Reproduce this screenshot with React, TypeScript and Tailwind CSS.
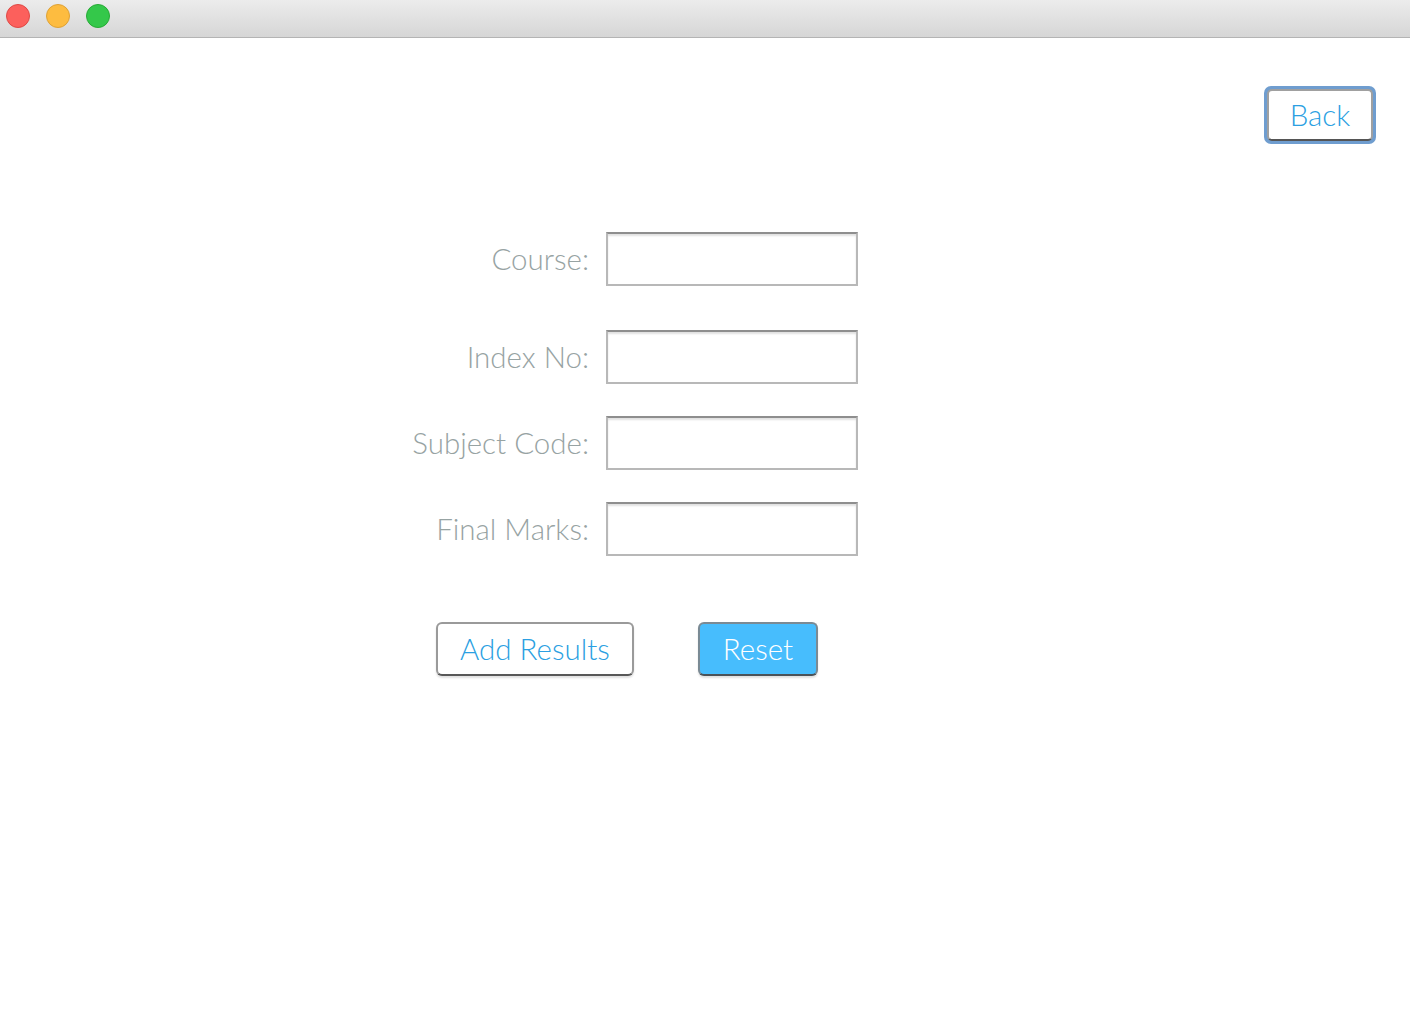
import React from "react";

const font = { fontFamily: "Lato, 'Open Sans', sans-serif" };

function Row({ label, className }: { label: string; className?: string }) {
  return (
    <div className={"flex items-center " + (className ?? "")}>
      <div className="w-[606px] pr-[17px] text-right text-[29.5px] font-light text-[#97a3a3] leading-none">
        {label}
      </div>
      <div className="w-[252px] h-[54px] border-2 border-[#b8b8b8] border-t-[#8e8e8e] bg-white shadow-[inset_0_2px_2px_rgba(0,0,0,0.12)]" />
    </div>
  );
}

export default function App() {
  return (
    <div className="w-[1410px] h-[1036px] bg-white overflow-hidden" style={font}>
      <div className="h-[38px] bg-gradient-to-b from-[#ececec] to-[#d6d6d6] border-b border-[#b4b4b4] flex items-start pt-[4px] pl-[6px] gap-[16px]">
        <div className="w-[24px] h-[24px] rounded-full bg-[#fc605c] border border-[#de4a45]" />
        <div className="w-[24px] h-[24px] rounded-full bg-[#fdbc40] border border-[#dea236]" />
        <div className="w-[24px] h-[24px] rounded-full bg-[#34c84a] border border-[#27aa35]" />
      </div>
      <div className="flex justify-end pr-[34px] pt-[48px]">
        <div className="w-[112px] h-[58px] rounded-[7px] bg-[#6f9dcf] p-[3px]">
          <div className="w-full h-full rounded-[5px] bg-white border-2 border-[#a0a0a0] border-b-[#555] flex items-center justify-center text-[29.5px] font-light text-[#2b9fe2] leading-none">
            Back
          </div>
        </div>
      </div>
      <Row label="Course:" className="mt-[88px]" />
      <Row label="Index No:" className="mt-[44px]" />
      <Row label="Subject Code:" className="mt-[32px]" />
      <Row label="Final Marks:" className="mt-[32px]" />
      <div className="flex mt-[66px] pl-[436px] gap-[64px]">
        <div className="w-[198px] h-[54px] rounded-[6px] bg-white border-2 border-[#9a9a9a] border-b-[#585858] shadow-[0_2px_2px_rgba(0,0,0,0.12)] flex items-center justify-center text-[29.5px] font-light text-[#2b9fe2] leading-none">
          Add Results
        </div>
        <div className="w-[120px] h-[54px] rounded-[6px] bg-[#47bdfd] border-2 border-[#7a8a94] border-b-[#4a5258] shadow-[0_2px_2px_rgba(0,0,0,0.12)] flex items-center justify-center text-[29.5px] font-light text-white leading-none">
          Reset
        </div>
      </div>
    </div>
  );
}
